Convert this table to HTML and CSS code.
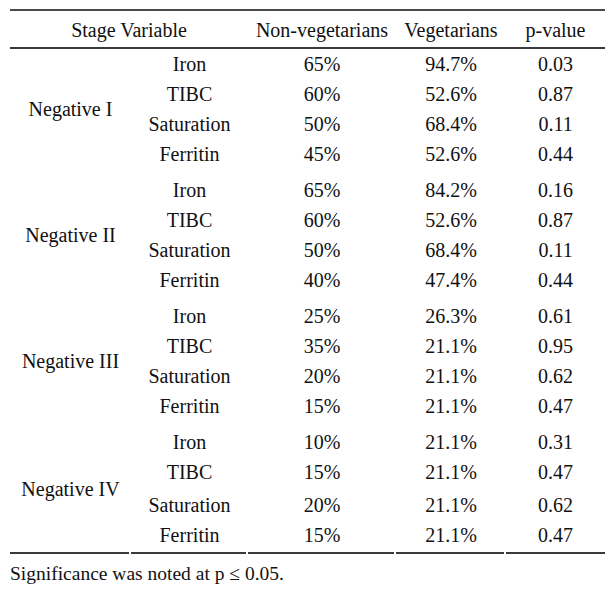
FILE: index.html
```html
<!DOCTYPE html>
<html lang="en">
<head>
<meta charset="utf-8">
<title>Iron status by stage</title>
<link rel="stylesheet" href="styles.css">
</head>
<body>
<div class="page">
  <table class="data">
    <colgroup>
      <col class="c-stage">
      <col class="c-var">
      <col class="c-nonveg">
      <col class="c-veg">
      <col class="c-p">
    </colgroup>
    <thead>
      <tr>
        <th colspan="2">Stage Variable</th>
        <th>Non-vegetarians</th>
        <th>Vegetarians</th>
        <th>p-value</th>
      </tr>
    </thead>
    <tbody class="group">
      <tr><td class="stage" rowspan="4">Negative I</td><td>Iron</td><td>65%</td><td>94.7%</td><td>0.03</td></tr>
      <tr><td>TIBC</td><td>60%</td><td>52.6%</td><td>0.87</td></tr>
      <tr><td>Saturation</td><td>50%</td><td>68.4%</td><td>0.11</td></tr>
      <tr><td>Ferritin</td><td>45%</td><td>52.6%</td><td>0.44</td></tr>
    </tbody>
    <tbody class="group">
      <tr><td class="stage" rowspan="4">Negative II</td><td>Iron</td><td>65%</td><td>84.2%</td><td>0.16</td></tr>
      <tr><td>TIBC</td><td>60%</td><td>52.6%</td><td>0.87</td></tr>
      <tr><td>Saturation</td><td>50%</td><td>68.4%</td><td>0.11</td></tr>
      <tr><td>Ferritin</td><td>40%</td><td>47.4%</td><td>0.44</td></tr>
    </tbody>
    <tbody class="group">
      <tr><td class="stage" rowspan="4">Negative III</td><td>Iron</td><td>25%</td><td>26.3%</td><td>0.61</td></tr>
      <tr><td>TIBC</td><td>35%</td><td>21.1%</td><td>0.95</td></tr>
      <tr><td>Saturation</td><td>20%</td><td>21.1%</td><td>0.62</td></tr>
      <tr><td>Ferritin</td><td>15%</td><td>21.1%</td><td>0.47</td></tr>
    </tbody>
    <tbody class="group last">
      <tr><td class="stage" rowspan="4">Negative IV</td><td>Iron</td><td>10%</td><td>21.1%</td><td>0.31</td></tr>
      <tr><td>TIBC</td><td>15%</td><td>21.1%</td><td>0.47</td></tr>
      <tr class="loose"><td>Saturation</td><td>20%</td><td>21.1%</td><td>0.62</td></tr>
      <tr class="end"><td>Ferritin</td><td>15%</td><td>21.1%</td><td>0.47</td></tr>
    </tbody>
  </table>
  <p class="note">Significance was noted at p ≤ 0.05.</p>
</div>
</body>
</html>
```

FILE: styles.css
```css
html, body {
  margin: 0;
  padding: 0;
  background: #ffffff;
}

.page {
  padding: 9px 0 0 10px;
  font-family: "Liberation Serif", "Times New Roman", serif;
  color: #111111;
}

.data {
  width: 595px;
  table-layout: fixed;
  border-collapse: collapse;
  border-top: 2px solid #4a4a4a;
  font-size: 20px;
}

.c-stage { width: 121px; }
.c-var { width: 117px; }
.c-nonveg { width: 148px; }
.c-veg { width: 110px; }
.c-p { width: 99px; }

.data th {
  font-weight: normal;
  line-height: 30px;
  padding: 4px 0 2px;
  text-align: center;
  border-bottom: 2px solid #3a3a3a;
}

.data td {
  line-height: 30px;
  padding: 0;
  text-align: center;
  vertical-align: middle;
  white-space: nowrap;
}

.group + .group tr:first-child td {
  padding-top: 6px;
}

.last .loose td {
  padding-top: 3px;
}

.last .end td,
.last .stage {
  padding-bottom: 4px;
  background-image: linear-gradient(#3a3a3a, #3a3a3a);
  background-repeat: no-repeat;
  background-position: left bottom;
  background-size: calc(100% - 2px) 2px;
}

.last .end td:last-child {
  background-size: 100% 2px;
}

.note {
  margin: 8px 0 0;
  font-size: 19.5px;
  line-height: 24px;
}
```
